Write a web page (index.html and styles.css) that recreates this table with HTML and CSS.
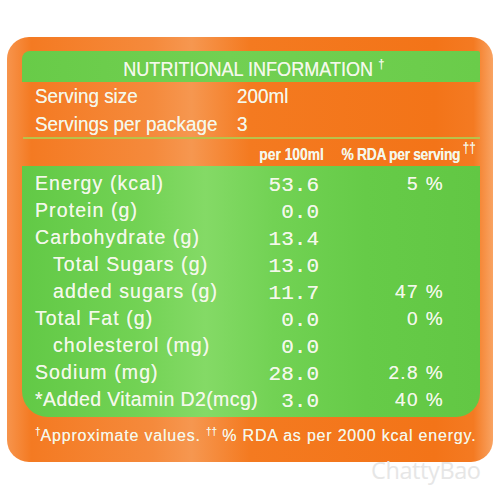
FILE: index.html
```html
<!DOCTYPE html>
<html>
<head>
<meta charset="utf-8">
<link rel="stylesheet" href="styles.css">
</head>
<body>
<div class="page">
  <div class="label">
    <div class="title-band"><span class="title">NUTRITIONAL INFORMATION<sup class="dag">†</sup></span></div>
    <div class="serving">
      <span class="sv">Serving size</span><span class="sv">200ml</span>
      <span class="sv">Servings per package</span><span class="sv">3</span>
    </div>
    <div class="rule"></div>
    <div class="head">
      <span class="h-text"><span class="h-per">per 100ml</span><span class="h-rda">% RDA per serving</span><sup class="dd">††</sup></span>
    </div>
    <div class="panel">
      <div class="grid">
        <span class="name">Energy (kcal)</span><span class="num">53.6</span><span class="rda">5 %</span>
        <span class="name">Protein (g)</span><span class="num">0.0</span><span class="rda"></span>
        <span class="name">Carbohydrate (g)</span><span class="num">13.4</span><span class="rda"></span>
        <span class="name sub">Total Sugars (g)</span><span class="num">13.0</span><span class="rda"></span>
        <span class="name sub">added sugars (g)</span><span class="num">11.7</span><span class="rda">47 %</span>
        <span class="name">Total Fat (g)</span><span class="num">0.0</span><span class="rda">0 %</span>
        <span class="name sub">cholesterol (mg)</span><span class="num">0.0</span><span class="rda"></span>
        <span class="name">Sodium (mg)</span><span class="num">28.0</span><span class="rda">2.8 %</span>
        <span class="name tight">*Added Vitamin D2(mcg)</span><span class="num">3.0</span><span class="rda">40 %</span>
      </div>
    </div>
    <div class="foot"><sup class="fs">†</sup>Approximate values. <sup class="fs">††</sup> % RDA as per 2000 kcal energy.</div>
  </div>
  <div class="mark">ChattyBao</div>
</div>
</body>
</html>
```

FILE: styles.css
```css
html, body {
  margin: 0;
  padding: 0;
  background: #ffffff;
}
body {
  width: 500px;
  height: 500px;
  overflow: hidden;
  font-family: "Liberation Sans", Arial, sans-serif;
  color: #f4f8ea;
}
.page {
  position: relative;
  width: 500px;
  height: 500px;
  padding-top: 37px;
  box-sizing: border-box;
}
.label {
  margin-left: 7px;
  width: 486px;
  height: 425px;
  box-sizing: border-box;
  padding: 14px 13px 0 15px;
  border-radius: 22px;
  background: linear-gradient(90deg, #f7944c 0%, #f47a22 5%, #f58a3c 30%, #f69750 38%, #f47a20 50%, #f37418 88%, #f47a22 96%, #f9a362 100%);
  text-shadow: 0 0 0.6px rgba(255, 255, 255, 0.7);
}
.title-band {
  height: 31px;
  background: linear-gradient(90deg, #68cb48 0%, #72d052 45%, #6acc4a 100%);
  border-radius: 8px 2px 0 0;
  display: flex;
  justify-content: center;
  align-items: center;
}
.title {
  display: inline-block;
  font-size: 21px;
  line-height: 31px;
  padding-top: 3px;
  transform: scaleX(0.86);
  margin-left: 6px;
}
.dag {
  font-size: 13px;
  vertical-align: 8px;
  line-height: 0;
  margin-left: 6px;
}
.serving {
  display: grid;
  grid-template-columns: 202px auto;
  padding-left: 13px;
  line-height: 28px;
  height: 55px;
}
.sv {
  display: inline-block;
  font-size: 20.5px;
  transform: scaleX(0.92);
  transform-origin: left center;
  white-space: nowrap;
}
.rule {
  height: 2px;
  background: #b9c24a;
  margin: 0 0 0 1px;
}
.head {
  display: flex;
  justify-content: flex-end;
  align-items: center;
  height: 27px;
  padding-right: 4px;
}
.h-text {
  display: inline-block;
  font-size: 16.5px;
  font-weight: bold;
  transform: scaleX(0.84);
  transform-origin: right center;
  white-space: nowrap;
  padding-top: 4px;
}
.h-per {
  margin-right: 21px;
}
.h-rda {
  letter-spacing: -0.4px;
}
.dd {
  font-size: 14px;
  font-weight: normal;
  vertical-align: 7px;
  line-height: 0;
  margin-left: 3px;
}
.panel {
  height: 251px;
  box-sizing: border-box;
  padding: 4px 0 0 13px;
  border-radius: 0 0 24px 26px;
  background: linear-gradient(90deg, #62c946 0%, #72d254 25%, #84da66 40%, #72d254 55%, #66cb48 75%, #62c744 100%);
}
.grid {
  display: grid;
  grid-template-columns: 212px 72px 124px;
  grid-auto-rows: 27px;
  align-items: center;
}
.name {
  font-size: 19.5px;
  letter-spacing: 1.1px;
  white-space: nowrap;
}
.name.sub {
  padding-left: 18px;
}
.name.tight {
  letter-spacing: 0.4px;
}
.num {
  font-family: "Liberation Mono", "DejaVu Sans Mono", monospace;
  font-size: 21px;
  text-align: right;
  padding-top: 3px;
}
.rda {
  font-size: 19px;
  letter-spacing: 1.4px;
  text-align: right;
  margin-right: -1px;
}
.foot {
  margin-top: 10px;
  padding-left: 13px;
  font-size: 16px;
  letter-spacing: 0.8px;
  white-space: nowrap;
}
.fs {
  font-size: 10px;
  vertical-align: 6px;
  line-height: 0;
  letter-spacing: 0;
}
.mark {
  position: absolute;
  left: 371px;
  top: 454px;
  font-family: "Open Sans", sans-serif;
  font-size: 23.5px;
  color: #e6e6e6;
  letter-spacing: -0.4px;
}
```
